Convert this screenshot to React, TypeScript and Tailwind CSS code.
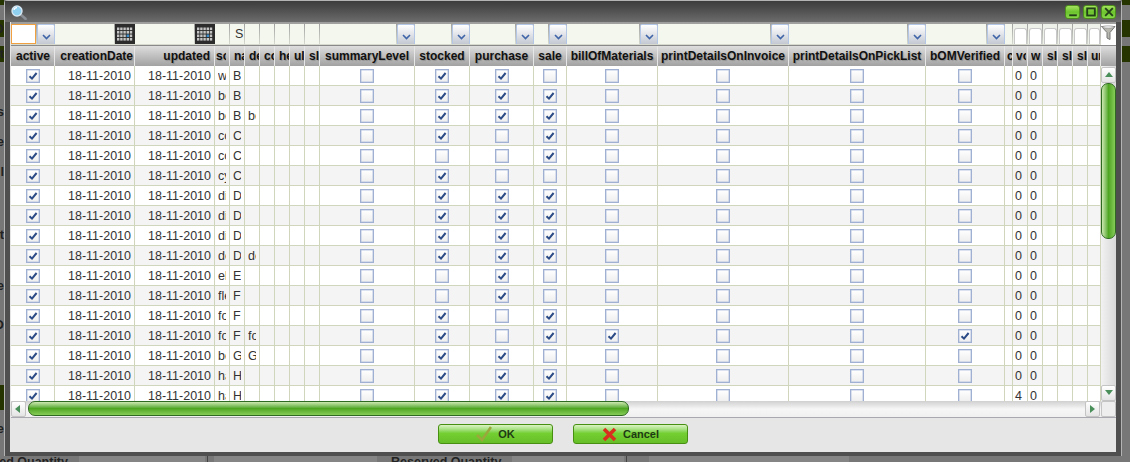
import type { ReactNode } from 'react';

const gridCols =
  'grid grid-cols-[44px_80px_80px_15px_15px_15px_15px_15px_15px_15px_95px_55px_64px_33px_91px_131px_137px_79px_8px_15px_15px_15px_15px_15px_13px] w-[1090px]';

const headers: { label: string; cls: string; narrow?: boolean }[] = [
  { label: 'active', cls: 'justify-center pl-px' },
  { label: 'creationDate', cls: 'justify-end pr-px' },
  { label: 'updated', cls: 'justify-end pr-[4px]' },
  { label: 'so', cls: 'pl-px', narrow: true },
  { label: 'na', cls: 'pl-[4px]', narrow: true },
  { label: 'de', cls: 'pl-[4px]', narrow: true },
  { label: 'co', cls: 'pl-[4px]', narrow: true },
  { label: 'he', cls: 'pl-[4px]', narrow: true },
  { label: 'ul', cls: 'pl-[4px]', narrow: true },
  { label: 'sl', cls: 'pl-[4px]', narrow: true },
  { label: 'summaryLevel', cls: 'justify-center' },
  { label: 'stocked', cls: 'justify-center' },
  { label: 'purchase', cls: 'justify-center' },
  { label: 'sale', cls: 'justify-center' },
  { label: 'billOfMaterials', cls: 'justify-center' },
  { label: 'printDetailsOnInvoice', cls: 'justify-center' },
  { label: 'printDetailsOnPickList', cls: 'justify-center' },
  { label: 'bOMVerified', cls: 'justify-center' },
  { label: 'c', cls: 'pl-[2px]' },
  { label: 'vo', cls: 'pl-[3px]', narrow: true },
  { label: 'w', cls: 'pl-[3px]', narrow: true },
  { label: 'sl', cls: 'pl-[4px]', narrow: true },
  { label: 'sl', cls: 'pl-[4px]', narrow: true },
  { label: 'sl', cls: 'pl-[4px]', narrow: true },
  { label: 'ur', cls: 'pl-[3px]', narrow: true },
];

// so, name, description, stocked, purchase, sale
const rows: [string, string, string, number, number, number][] = [
  ['w', 'B', '', 1, 1, 0],
  ['bo', 'B', '', 1, 1, 1],
  ['bo', 'B', 'bo', 1, 1, 1],
  ['co', 'C', '', 1, 0, 1],
  ['co', 'C', '', 0, 0, 1],
  ['cy', 'C', '', 1, 0, 0],
  ['di', 'D', '', 1, 1, 1],
  ['di', 'D', '', 1, 1, 1],
  ['di', 'D', '', 1, 1, 1],
  ['do', 'D', 'do', 1, 1, 1],
  ['el', 'E', '', 0, 1, 0],
  ['fle', 'F', '', 0, 1, 0],
  ['fo', 'F', '', 1, 0, 1],
  ['fo', 'F', 'fo', 1, 0, 1],
  ['bo', 'G', 'G', 1, 1, 0],
  ['ha', 'H', '', 1, 1, 1],
  ['ha', 'H', '', 1, 1, 1],
];

const Check = ({ on }: { on?: boolean }) => (
  <span className="flex h-[14px] w-[14px] items-center justify-center border border-[#9fb0d2] bg-gradient-to-b from-white to-[#eeeeee] shadow-[inset_0_0_0_0.5px_#b9c6df]">
    {on && (
      <svg width="10" height="10" viewBox="0 0 10 10">
        <path d="M1.5 5.2 L4 7.6 L8.6 2" fill="none" stroke="#2b4a86" strokeWidth="2" />
      </svg>
    )}
  </span>
);

const Cell = ({ children, cls = '' }: { children?: ReactNode; cls?: string }) => (
  <div className={`flex items-center overflow-hidden whitespace-nowrap border-r border-[#cfd6bc] ${cls}`}>{children}</div>
);

const Clip = ({ children }: { children?: ReactNode }) => <span className="block w-[8px] overflow-hidden">{children}</span>;

const Box = ({ on, cls }: { on?: boolean; cls?: string }) => (
  <Cell cls={`justify-center ${cls ?? ''}`}>
    <Check on={on} />
  </Cell>
);

const Chevron = () => (
  <svg width="9" height="6" viewBox="0 0 9 6">
    <path d="M1 1 L4.5 4.5 L8 1" fill="none" stroke="#3f64a8" strokeWidth="1.6" />
  </svg>
);

const Combo = ({ focused }: { focused?: boolean }) => (
  <div className="flex h-full min-w-0 gap-px">
    <div className={focused ? 'flex-1 border border-[#f0a040] bg-white' : 'flex-1 bg-[#f3f7ee]'} />
    <div className="flex w-[18px] shrink-0 items-center justify-center rounded-t-[2px] border border-b-0 border-[#b4c6e6] bg-gradient-to-b from-white to-[#c3c8d2] pt-[5px]">
      <Chevron />
    </div>
  </div>
);

const CalendarIcon = () => (
  <svg width="16" height="14" viewBox="0 0 16 14">
    {[0, 1, 2, 3].map((r) =>
      [0, 1, 2, 3, 4].map((c) => (
        <rect key={`${r}-${c}`} x={c * 3.2} y={r * 3.5 + 0.5} width="2.4" height="2.6" fill={r === 2 && c === 3 ? '#3d8fd0' : '#c4c4c4'} />
      ))
    )}
  </svg>
);

const DateFilter = () => (
  <div className="flex h-full min-w-0 gap-px">
    <div className="flex-1 bg-[#f3f7ee]" />
    <div className="flex w-[20px] shrink-0 items-center justify-center bg-[#2c2c2c]">
      <CalendarIcon />
    </div>
  </div>
);

const TextFilter = ({ value }: { value?: string }) => (
  <div className="mr-px flex h-full items-end justify-start bg-[#f3f7ee] pl-[5px] text-[12.5px] text-[#333]">{value}</div>
);

const CheckFilter = () => (
  <div className="mr-px flex h-full items-stretch bg-[#eef0ea] pt-[4px] pl-px">
    <div className="flex-1 rounded-t-[3px] border border-b-0 border-[#c8c8c8] bg-white" />
  </div>
);

const Funnel = () => (
  <svg width="15" height="16" viewBox="0 0 15 16">
    <path d="M0.5 1.5 H14 L9 7.5 V14.5 L6 13 V7.5 Z" fill="#b8b8b0" stroke="#777" strokeWidth="1" />
    <ellipse cx="7.2" cy="2" rx="6" ry="1.2" fill="#f2f2f2" stroke="#8a8a8a" strokeWidth="0.6" />
  </svg>
);

const Triangle = ({ dir }: { dir: 'up' | 'down' | 'left' | 'right' }) => {
  const points = { up: '0,6 8,6 4,1', down: '0,1 8,1 4,6', left: '5,0 5,8 0,4', right: '1,0 1,8 6,4' }[dir];
  return (
    <svg width="8" height="8" viewBox="0 0 8 8">
      <polygon points={points} fill="#4a8f5a" />
    </svg>
  );
};

const ScrollButton = ({ dir }: { dir: 'up' | 'down' | 'left' | 'right' }) => (
  <div className="flex h-[16px] w-[15px] shrink-0 items-center justify-center rounded-[2px] border border-[#c4c4c4] bg-gradient-to-b from-white to-[#e4e4e4]">
    <Triangle dir={dir} />
  </div>
);

const WinButton = ({ children }: { children: ReactNode }) => (
  <div className="flex h-[14px] w-[15px] items-center justify-center rounded-[3px] border border-[#4d8f1c] bg-gradient-to-b from-[#a4e25e] via-[#6cc42c] to-[#86d848]">
    <svg width="12" height="12" viewBox="0 0 11 11" fill="none" stroke="#24401a" strokeWidth="1.7">
      {children}
    </svg>
  </div>
);

const Magnifier = () => (
  <svg width="16" height="15" viewBox="0 0 16 15">
    <path d="M9 9 L14.5 13.8" stroke="#8a8f96" strokeWidth="2.6" strokeLinecap="round" />
    <circle cx="6" cy="6" r="5" fill="#8fd0f0" stroke="#d8e8f4" strokeWidth="1.4" />
    <path d="M3 5 A3 3 0 0 1 6 2.6" fill="none" stroke="#fff" strokeWidth="1.2" />
  </svg>
);

const FooterButton = ({ icon, label }: { icon: ReactNode; label: string }) => (
  <button className="flex h-[20px] w-[115px] items-center justify-center gap-[6px] rounded-[3px] border border-[#468f10] bg-gradient-to-b from-[#dcf3c4] via-[#74d032] via-45% to-[#66be28] text-[11px] font-bold text-[#1e3a14]">
    {icon}
    {label}
  </button>
);

const leftStrip: { h: string; text?: string; green?: boolean }[] = [
  { h: 'h-[5px]', green: true },
  { h: 'h-[15px]' },
  { h: 'h-[17px]', green: true, text: 'D' },
  { h: 'h-[9px]' },
  { h: 'h-[16px]', green: true, text: 'st' },
  { h: 'h-[43px]' },
  { h: 'h-[14px]', text: 's' },
  { h: 'h-[16px]' },
  { h: 'h-[14px]', text: 'e' },
  { h: 'h-[16px]' },
  { h: 'h-[14px]', text: 'l' },
  { h: 'h-[49px]' },
  { h: 'h-[14px]', text: 'ct' },
  { h: 'h-[37px]' },
  { h: 'h-[14px]', text: 'e' },
  { h: 'h-[25px]' },
  { h: 'h-[14px]', text: 'D' },
  { h: 'h-[53px]' },
  { h: 'h-[25px]', green: true },
  { h: 'h-[12px]' },
  { h: 'h-[14px]', text: 'e' },
];

export default function App() {
  return (
    <div className="relative h-[462px] w-[1130px] overflow-hidden bg-[#777777] font-['Liberation_Sans',Arial,sans-serif]">
      {/* page behind the dialog */}
      <div className="flex h-[456px] justify-between">
        <div className="flex w-[4px] flex-col text-[13px] font-bold text-[#222]">
          {leftStrip.map((s, i) => (
            <div key={i} className={`flex shrink-0 items-center justify-end overflow-hidden ${s.h} ${s.green ? 'bg-[#263500]' : ''}`}>
              {s.text}
            </div>
          ))}
        </div>
        <div className="flex w-[8px] flex-col">
          <div className="h-[5px] bg-[#263500]" />
          <div className="mt-[15px] h-[17px] bg-[#263500]" />
          <div className="mt-[9px] h-[16px] bg-[#263500]" />
        </div>
      </div>
      <div className="flex h-[6px] overflow-hidden text-[12.5px] font-bold leading-[13px] text-[#222]">
        <div className="flex w-[68px] justify-end whitespace-nowrap">Reserved Quantity</div>
        <div className="ml-[11px] h-full w-[126px] bg-[#858585]" />
        <div className="ml-[2px] h-full w-px bg-[#444]" />
        <div className="ml-[6px] h-full w-[163px] bg-[#858585]" />
        <div className="ml-[14px] whitespace-nowrap">Reserved Quantity</div>
        <div className="ml-[11px] h-full w-[112px] bg-[#858585]" />
        <div className="ml-[2px] h-full w-px bg-[#444]" />
        <div className="ml-[22px] h-full w-[200px] bg-[#858585]" />
      </div>

      {/* dialog */}
      <div className="absolute left-[4px] top-0 flex h-[456px] w-[1118px] flex-col rounded-t-[4px] border-x border-t border-[#b4b4b4] bg-[#4f4f4f]">
        <div className="flex h-[21px] shrink-0 items-start bg-gradient-to-b from-[#3c3c3c] to-[#6c6c6c] pl-[6px] pr-[5px] pt-[4px]">
          <Magnifier />
          <div className="ml-auto flex gap-[3px]">
            <WinButton>
              <path d="M2 8.5 H9" />
            </WinButton>
            <WinButton>
              <rect x="2" y="2.2" width="7" height="6.5" />
            </WinButton>
            <WinButton>
              <path d="M2 2 L9 9 M9 2 L2 9" />
            </WinButton>
          </div>
        </div>

        <div className="mx-[5px] flex h-[430px] flex-col bg-[#e6e6e6] pl-px">
          {/* filter row */}
          <div className="flex h-[23px] shrink-0 bg-gradient-to-b from-[#9c9c9c] to-[#d8dcd0] pt-[2px]">
            <div className={`${gridCols} h-[20px]`}>
              <Combo focused />
              <DateFilter />
              <DateFilter />
              <TextFilter />
              <TextFilter value="S" />
              <TextFilter />
              <TextFilter />
              <TextFilter />
              <TextFilter />
              <TextFilter />
              <Combo />
              <Combo />
              <Combo />
              <Combo />
              <Combo />
              <Combo />
              <Combo />
              <Combo />
              <TextFilter />
              <CheckFilter />
              <CheckFilter />
              <CheckFilter />
              <CheckFilter />
              <CheckFilter />
              <CheckFilter />
            </div>
            <div className="flex w-[15px] justify-center bg-white pt-[1px]">
              <Funnel />
            </div>
          </div>

          {/* column headers */}
          <div className="flex h-[21px] shrink-0 border-t border-[#8a8a8a] bg-gradient-to-b from-[#dedede] to-[#a2a2a2]">
            <div className={`${gridCols} h-full text-[12px] font-bold text-[#111] [text-shadow:1px_1px_1px_rgba(0,0,0,0.2)]`}>
              {headers.map((h, i) => (
                <div key={i} className={`flex items-center overflow-hidden whitespace-nowrap border-r border-[#e6e6e6] ${h.cls}`}>
                  {h.narrow ? <span className="block w-[10px] overflow-hidden">{h.label}</span> : h.label}
                </div>
              ))}
            </div>
          </div>

          {/* rows and vertical scrollbar */}
          <div className="flex h-[335px] shrink-0 overflow-hidden">
            <div className="w-[1090px] overflow-hidden bg-white text-[12.5px] text-[#333]">
              {rows.map((r, i) => (
                <div key={i} className={`${gridCols} h-[20px] border-b border-[#cfd6bc] ${i % 2 === 1 ? 'bg-[#f4f4f4]' : 'bg-white'}`}>
                  <Box on cls="pl-px" />
                  <Cell cls="justify-end pr-[3px] pt-px">18-11-2010</Cell>
                  <Cell cls="justify-end pr-[3px] pt-px">18-11-2010</Cell>
                  <Cell cls="pl-[3px] pt-px">
                    <Clip>{r[0]}</Clip>
                  </Cell>
                  <Cell cls="pl-[3px] pt-px">
                    <Clip>{r[1]}</Clip>
                  </Cell>
                  <Cell cls="pl-[3px] pt-px">
                    <Clip>{r[2]}</Clip>
                  </Cell>
                  <Cell />
                  <Cell />
                  <Cell />
                  <Cell />
                  <Box />
                  <Box on={r[3] === 1} />
                  <Box on={r[4] === 1} />
                  <Box on={r[5] === 1} />
                  <Box on={i === 13} />
                  <Box />
                  <Box />
                  <Box on={i === 13} />
                  <Cell />
                  <Cell cls="pl-[2px] pt-px">{i === 16 ? '4' : '0'}</Cell>
                  <Cell cls="pl-[2px] pt-px">0</Cell>
                  <Cell />
                  <Cell />
                  <Cell />
                  <Cell />
                </div>
              ))}
            </div>
            <div className="flex w-[15px] shrink-0 flex-col bg-gradient-to-r from-[#f2f2f2] to-[#d8d8d8] pt-px">
              <ScrollButton dir="up" />
              <div className="h-[156px] shrink-0 rounded-[7px] border border-[#2f6a22] bg-gradient-to-r from-[#cde8b0] via-[#4fa620] to-[#86cc58]" />
              <div className="flex-1" />
              <ScrollButton dir="down" />
            </div>
          </div>

          {/* horizontal scrollbar */}
          <div className="flex h-[17px] shrink-0 border-b border-[#a8a8b0]">
            <div className="flex w-[1090px] bg-gradient-to-b from-[#d0d0d0] via-[#f6f6f6] to-[#f0f0f0]">
              <ScrollButton dir="left" />
              <div className="ml-[2px] h-[15px] w-[601px] rounded-[7px] border border-[#2f6a22] bg-gradient-to-b from-[#cde8b0] via-[#4fa620] to-[#86cc58]" />
              <div className="flex-1" />
              <div className="mr-px">
                <ScrollButton dir="right" />
              </div>
            </div>
            <div className="h-[16px] w-[15px] rounded-[2px] border border-[#c4c4c4] bg-[#eeeeee]" />
          </div>

          {/* footer */}
          <div className="flex flex-1 justify-center gap-[20px] pt-[6px] pr-px">
            <FooterButton
              label="OK"
              icon={
                <svg width="16" height="16" viewBox="0 0 16 16">
                  <path d="M1 9 L6 14 L15 1" fill="none" stroke="#9aa83c" strokeWidth="2.6" />
                </svg>
              }
            />
            <FooterButton
              label="Cancel"
              icon={
                <svg width="15" height="15" viewBox="0 0 15 15">
                  <path d="M2 2 L13 13 M13 2 L2 13" fill="none" stroke="#d8301e" strokeWidth="3.6" />
                </svg>
              }
            />
          </div>
        </div>
      </div>
    </div>
  );
}
